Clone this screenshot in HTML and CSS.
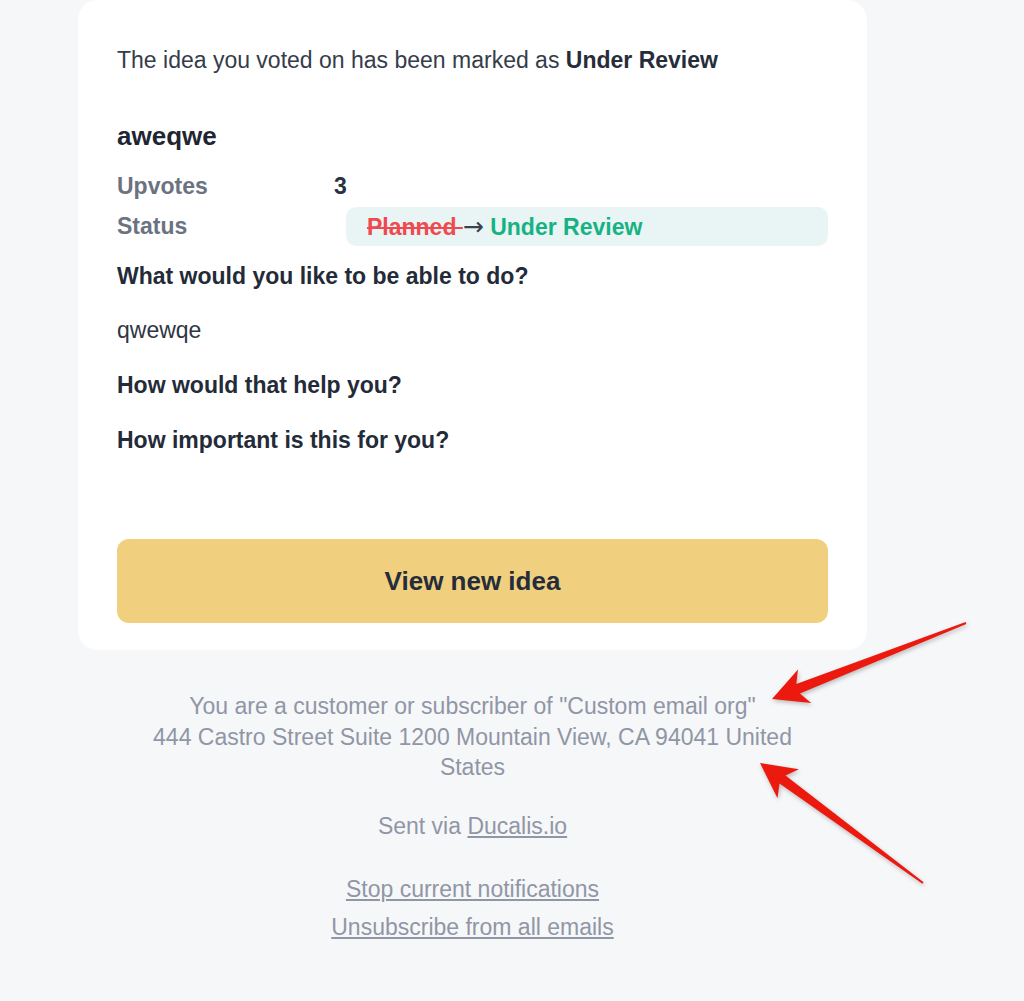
FILE: index.html
```html
<!DOCTYPE html>
<html>
<head>
<meta charset="utf-8">
<link rel="stylesheet" href="styles.css">
</head>
<body>
<div class="page">
  <div class="card">
    <p class="intro">The idea you voted on has been marked as <b>Under Review</b></p>
    <h2 class="title">aweqwe</h2>
    <div class="meta">
      <div class="label">Upvotes</div>
      <div class="value">3</div>
      <div class="label">Status</div>
      <div class="value"><div class="pill"><span class="old">Planned&nbsp;</span><span class="arr">→</span> <span class="new">Under Review</span></div></div>
    </div>
    <p class="q q1">What would you like to be able to do?</p>
    <p class="a">qwewqe</p>
    <p class="q q2">How would that help you?</p>
    <p class="q q2">How important is this for you?</p>
    <a class="btn" href="#">View new idea</a>
  </div>
  <div class="footer">
    <p class="addr">You are a customer or subscriber of "Custom email org"<br>444 Castro Street Suite 1200 Mountain View, CA 94041 United States</p>
    <p class="sent">Sent via <a href="#">Ducalis.io</a></p>
    <div class="links">
      <a href="#">Stop current notifications</a>
      <a href="#">Unsubscribe from all emails</a>
    </div>
  </div>
  <svg class="annot" width="1024" height="1001" viewBox="0 0 1024 1001">
    <polygon points="772,699 811.2,703 799.9,693.5 966.4,623.9 965.6,622.1 796.3,684.1 798,669.4" />
    <polygon points="760,763 798.9,769.3 785.5,775.6 923.6,882.2 922.4,883.8 779.5,783.6 777.5,798.3" />
  </svg>
</div>
</body>
</html>
```
FILE: styles.css
```css
html, body {
  margin: 0;
  padding: 0;
  background: #f6f7f9;
}
body {
  font-family: "Liberation Sans", Arial, sans-serif;
  color: #2f3644;
}
.page {
  position: relative;
  width: 1024px;
  height: 1001px;
  overflow: hidden;
}
.card {
  margin-left: 78px;
  width: 789px;
  box-sizing: border-box;
  background: #ffffff;
  border-radius: 20px;
  padding: 45px 39px 27px 39px;
}
.intro {
  margin: 0;
  font-size: 23px;
  line-height: 30px;
  color: #353c4a;
}
.intro b { color: #262d3a; }
.title {
  margin: 46px 0 0 0;
  font-size: 26px;
  line-height: 30px;
  font-weight: bold;
  color: #1f2633;
}
.meta {
  margin-top: 15px;
  display: grid;
  grid-template-columns: 217px 1fr;
  grid-auto-rows: 40px;
  align-items: center;
  font-size: 23px;
  font-weight: bold;
}
.label { color: #6b7280; }
.value { color: #2a3140; }
.pill {
  margin-left: 12px;
  height: 39px;
  line-height: 39px;
  box-sizing: border-box;
  background: #e8f5f4;
  border-radius: 10px;
  padding-left: 21px;
  white-space: nowrap;
}
.old {
  color: #ef4a4f;
  text-decoration: line-through;
  text-decoration-thickness: 2px;
}
.arr {
  color: #3a4150;
  font-weight: normal;
  font-family: "DejaVu Sans", sans-serif;
  font-size: 25px;
}
.new { color: #17b283; }
.q {
  margin: 15px 0 0 0;
  font-size: 23px;
  line-height: 30px;
  font-weight: bold;
  color: #242b38;
}
.q2 { margin-top: 25px; }
.a {
  margin: 24px 0 0 0;
  font-size: 23px;
  line-height: 30px;
  color: #2f3644;
}
.btn {
  display: flex;
  align-items: center;
  justify-content: center;
  margin-top: 84px;
  height: 84px;
  background: #f0cf7f;
  border-radius: 12px;
  font-size: 26px;
  font-weight: bold;
  color: #252c3a;
  text-decoration: none;
}
.footer {
  margin-left: 132px;
  width: 681px;
  text-align: center;
  color: #9096a5;
  font-size: 23px;
}
.addr {
  margin: 41px 0 0 0;
  line-height: 30.5px;
}
.sent {
  margin: 28px 0 0 0;
  line-height: 30px;
}
.footer a { color: #9096a5; text-decoration: underline; }
.links {
  margin-top: 29px;
  display: flex;
  flex-direction: column;
  align-items: center;
  line-height: 38px;
}
.annot {
  position: absolute;
  left: 0;
  top: 0;
  pointer-events: none;
}
.annot polygon {
  fill: #ec1a0e;
  filter: drop-shadow(1px 2px 2px rgba(0,0,0,0.25));
}
```
